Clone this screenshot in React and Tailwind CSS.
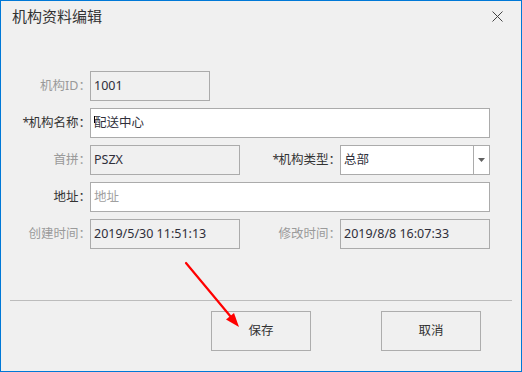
import React from 'react';

const font = { fontFamily: '"Noto Sans", "Noto Sans CJK SC", sans-serif' };

const Label = ({ text, required, muted }) => (
    <div className={`flex items-center justify-end -mr-[1px] text-[12.5px] ${muted ? 'text-[#9a9a9a]' : 'text-[#333333]'}`}>
        {required && <span className="mr-[-1px]">*</span>}
        {text}：
    </div>
);

const Box = ({ value, enabled, placeholder, className = '', children }) => (
    <div
        className={`h-[30px] border border-[#ababab] flex items-center pl-[3px] text-[12.5px] ${
            enabled ? 'bg-white' : 'bg-[#f0f0f0]'
        } ${className}`}
    >
        {children}
        {value ? (
            <span className="text-[#2f2f3a]">{value}</span>
        ) : (
            <span className="text-[#a0a0a0]">{placeholder}</span>
        )}
    </div>
);

const App = () => {
    return (
        <div className="relative w-[522px] h-[372px]" style={font}>
            <div className="w-full h-full border border-[#0078d7] bg-[#f0f0f0] flex flex-col">
                {/* title bar */}
                <div className="h-[30px] flex items-center justify-between pl-[11px] pr-[18px]">
                    <span className="text-[15px] text-[#333333]">机构资料编辑</span>
                    <svg width="11" height="11" viewBox="0 0 11 11">
                        <path d="M0.5 0.5 L10.5 10.5 M10.5 0.5 L0.5 10.5" stroke="#444" strokeWidth="1" />
                    </svg>
                </div>

                {/* form */}
                <div className="mt-[40px] ml-[9px] grid grid-cols-[80px_150px_100px_150px] gap-y-[7px]">
                    <Label text="机构ID" muted />
                    <Box value="1001" className="w-[120px]" />
                    <div className="col-span-2" />

                    <Label text="机构名称" required />
                    <Box value="配送中心" enabled className="col-span-3 relative">
                        <span className="absolute left-[3px] top-[7px] w-px h-[7px] bg-black" />
                    </Box>

                    <Label text="首拼" muted />
                    <Box value="PSZX" />
                    <Label text="机构类型" required />
                    <div className="h-[30px] border border-[#ababab] bg-white flex text-[12.5px]">
                        <div className="flex-1 flex items-center pl-[3px] text-[#2f2f3a]">总部</div>
                        <div className="w-[16px] border-l border-[#ababab] flex items-center justify-center">
                            <svg width="7" height="4" viewBox="0 0 7 4">
                                <path d="M0 0 H7 L3.5 4 Z" fill="#606060" />
                            </svg>
                        </div>
                    </div>

                    <Label text="地址" />
                    <Box placeholder="地址" enabled className="col-span-3" />

                    <Label text="创建时间" muted />
                    <Box value="2019/5/30 11:51:13" />
                    <Label text="修改时间" muted />
                    <Box value="2019/8/8 16:07:33" />
                </div>

                {/* separator */}
                <div className="mt-[51px] mx-[9px] h-px bg-[#bcbcbc]" />

                {/* buttons */}
                <div className="mt-[10px] ml-[210px] flex gap-[70px]">
                    <button className="w-[100px] h-[40px] border border-[#adadad] bg-[#f0f0f0] text-[12.5px] text-[#333333]">
                        保存
                    </button>
                    <button className="w-[100px] h-[40px] border border-[#adadad] bg-[#f0f0f0] text-[12.5px] text-[#333333]">
                        取消
                    </button>
                </div>
            </div>

            {/* red annotation arrow */}
            <svg className="absolute left-0 top-0 pointer-events-none" width="522" height="372" viewBox="0 0 522 372">
                <path d="M186 263 L231 317" stroke="#ff0000" strokeWidth="2.2" strokeLinecap="round" />
                <path d="M239 327 L226 319.5 L234 313 Z" fill="#ff0000" />
            </svg>
        </div>
    );
};

export default App;
